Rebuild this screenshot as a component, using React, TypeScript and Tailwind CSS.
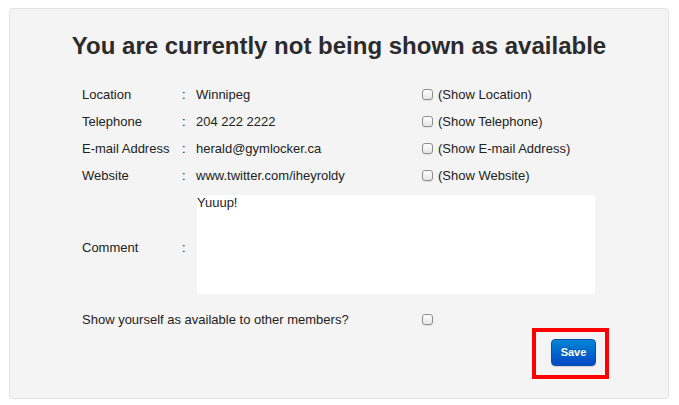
import React from "react";

function Check() {
  return (
    <span className="inline-block w-[11px] h-[11px] rounded-[3px] border border-[#8e8e8e] bg-gradient-to-b from-[#ffffff] to-[#e6e6e6] shadow-[0_1px_1px_rgba(0,0,0,0.08)] shrink-0" />
  );
}

const rows = [
  { label: "Location", value: "Winnipeg", show: "(Show Location)" },
  { label: "Telephone", value: "204 222 2222", show: "(Show Telephone)" },
  { label: "E-mail Address", value: "herald@gymlocker.ca", show: "(Show E-mail Address)" },
  { label: "Website", value: "www.twitter.com/iheyroldy", show: "(Show Website)" },
];

export default function App() {
  return (
    <div className="w-[679px] h-[405px] bg-white pt-[8px] pl-[9px]" style={{ fontFamily: '"Liberation Sans", Arial, sans-serif' }}>
      <div className="w-[660px] h-[391px] bg-[#f4f4f4] border border-[#e3e3e3] rounded-[4px] pt-[23px] text-[#222]">
        <h1 className="text-center text-[24px] leading-[28px] font-bold text-[#2b2b2b]">
          You are currently not being shown as available
        </h1>
        <div className="pl-[72px] pt-[21px] text-[13px]">
          {rows.map((r) => (
            <div key={r.label} className="flex items-center h-[27px]">
              <div className="w-[100px]">{r.label}</div>
              <div className="w-[14px]">:</div>
              <div className="w-[226px]">{r.value}</div>
              <div className="flex items-center gap-[5px]">
                <Check />
                <span>{r.show}</span>
              </div>
            </div>
          ))}
          <div className="flex items-center mt-[6px] h-[99px]">
            <div className="w-[100px] pt-[6px]">Comment</div>
            <div className="w-[15px] pt-[6px]">:</div>
            <div className="w-[398px] h-[99px] bg-white rounded-[2px] leading-[15px]">Yuuup!</div>
          </div>
          <div className="flex items-center h-[27px] mt-[12px]">
            <div className="w-[340px]">Show yourself as available to other members?</div>
            <Check />
          </div>
          <div className="flex pl-[450px]">
            <div className="border-[4px] border-[#ff0000] w-[77px] h-[51px] pl-[15px] pt-[7px] -mt-[5px]">
              <button className="w-[45px] h-[27px] rounded-[4px] bg-gradient-to-b from-[#0a84d6] to-[#0348c4] border border-[#0a4fb0] text-white text-[11px] font-bold shadow-[0_1px_1px_rgba(0,0,0,0.15)]" style={{ textShadow: "0 -1px 0 rgba(0,0,0,0.25)" }}>
                Save
              </button>
            </div>
          </div>
        </div>
      </div>
    </div>
  );
}
